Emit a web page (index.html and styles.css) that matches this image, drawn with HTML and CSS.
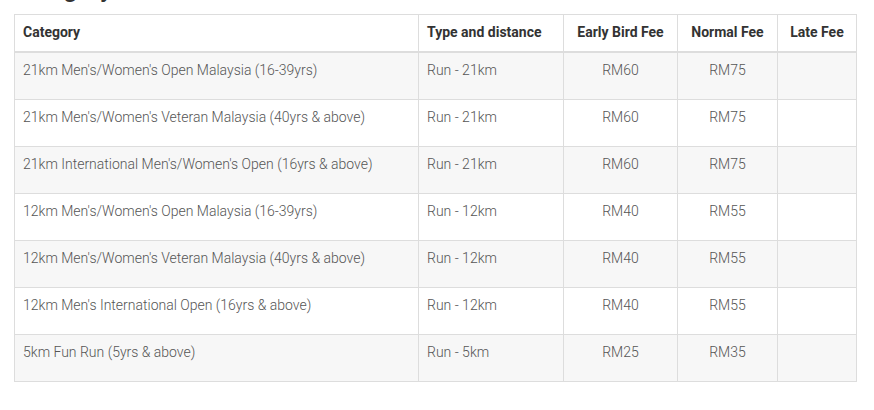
FILE: index.html
```html
<!DOCTYPE html>
<html lang="en">
<head>
<meta charset="utf-8">
<title>Category</title>
<link rel="stylesheet" href="styles.css">
</head>
<body>
<div class="wrap">
  <h2 class="heading">Category</h2>
  <table class="fees">
    <thead>
      <tr>
        <th class="c-cat">Category</th>
        <th class="c-type">Type and distance</th>
        <th class="c-early center">Early Bird Fee</th>
        <th class="c-normal center">Normal Fee</th>
        <th class="c-late center">Late Fee</th>
      </tr>
    </thead>
    <tbody>
      <tr><td><p>21km Men's/Women's Open Malaysia (16-39yrs)</p></td><td><p>Run - 21km</p></td><td class="center"><p>RM60</p></td><td class="center"><p>RM75</p></td><td></td></tr>
      <tr><td><p>21km Men's/Women's Veteran Malaysia (40yrs &amp; above)</p></td><td><p>Run - 21km</p></td><td class="center"><p>RM60</p></td><td class="center"><p>RM75</p></td><td></td></tr>
      <tr><td><p>21km International Men's/Women's Open (16yrs &amp; above)</p></td><td><p>Run - 21km</p></td><td class="center"><p>RM60</p></td><td class="center"><p>RM75</p></td><td></td></tr>
      <tr><td><p>12km Men's/Women's Open Malaysia (16-39yrs)</p></td><td><p>Run - 12km</p></td><td class="center"><p>RM40</p></td><td class="center"><p>RM55</p></td><td></td></tr>
      <tr><td><p>12km Men's/Women's Veteran Malaysia (40yrs &amp; above)</p></td><td><p>Run - 12km</p></td><td class="center"><p>RM40</p></td><td class="center"><p>RM55</p></td><td></td></tr>
      <tr><td><p>12km Men's International Open (16yrs &amp; above)</p></td><td><p>Run - 12km</p></td><td class="center"><p>RM40</p></td><td class="center"><p>RM55</p></td><td></td></tr>
      <tr><td><p>5km Fun Run (5yrs &amp; above)</p></td><td><p>Run - 5km</p></td><td class="center"><p>RM25</p></td><td class="center"><p>RM35</p></td><td></td></tr>
    </tbody>
  </table>
</div>
</body>
</html>
```
FILE: styles.css
```css
html, body {
  margin: 0;
  padding: 0;
  background: #fff;
}
body {
  font-family: Roboto, "Noto Sans", sans-serif;
  font-size: 14px;
  line-height: 20px;
  color: #555;
}
.wrap {
  padding: 0 17px 0 14px;
}
.heading {
  margin: -26px 0 0 0;
  height: 40px;
  font-size: 24px;
  line-height: 30px;
  font-weight: 700;
  color: #333;
}
.fees {
  width: 100%;
  border-collapse: collapse;
  border-spacing: 0;
  border: 1px solid #ddd;
}
.fees th,
.fees td {
  border: 1px solid #ddd;
  padding: 7px 8px 9px;
  text-align: left;
  vertical-align: top;
}
.fees th {
  font-weight: 700;
  color: #333;
  border-bottom-width: 2px;
}
.fees td {
  font-weight: 300;
}
.fees td p {
  margin: 0 0 10px;
}
.fees tbody tr:nth-child(odd) {
  background: #f7f7f7;
}
.fees .center {
  text-align: center;
}
.c-cat { width: 387px; }
.c-type { width: 128px; }
.c-early { width: 97px; }
.c-normal { width: 83px; }
.c-late { width: 62px; }
```
